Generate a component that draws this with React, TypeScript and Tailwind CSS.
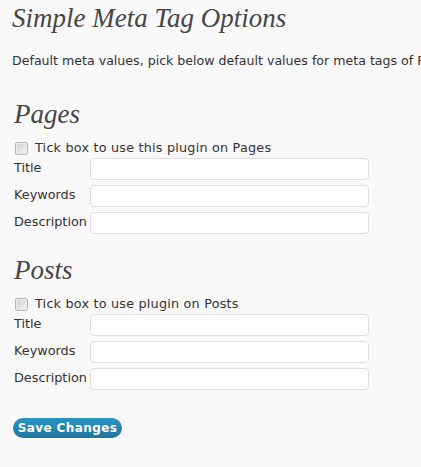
import React from 'react'

const serif = "font-['Georgia','Liberation_Serif',serif] italic font-normal text-[#464646]"
const sans = "font-['Verdana','DejaVu_Sans',sans-serif]"

function Field({ label }: { label: string }) {
  return (
    <div className="flex items-start h-[27px]">
      <label className="w-[76px] pt-[1px] text-[12.8px] text-[#333] leading-[18px] whitespace-nowrap">{label}</label>
      <input
        type="text"
        className="w-[279px] h-[22px] bg-white border border-[#dfdfdf] rounded-[4px] outline-none"
      />
    </div>
  )
}

function Section({ name, tick }: { name: string; tick: string }) {
  return (
    <div>
      <h3 className={`${serif} text-[27px] leading-[30px] pl-[2px]`}>{name}</h3>
      <div className="flex items-center mt-[11px] pl-[3px] h-[16px]">
        <span className="w-[13px] h-[13px] rounded-[2px] border border-[#b5b5b5] bg-gradient-to-br from-[#cfcfcf] to-[#f6f6f6] shadow-[inset_1px_1px_0_#eee]" />
        <span className="ml-[7px] text-[12.8px] text-[#333] leading-[16px] tracking-[0.2px] whitespace-nowrap">{tick}</span>
      </div>
      <div className="mt-[2px] pl-[2px]">
        <Field label="Title" />
        <Field label="Keywords" />
        <Field label="Description" />
      </div>
    </div>
  )
}

export default function App() {
  return (
    <div className={`${sans} bg-[#f9f9f9] w-[421px] h-[467px] overflow-hidden pl-[12px]`}>
      <h2 className={`${serif} text-[27px] leading-[30px] pt-[3px]`}>Simple Meta Tag Options</h2>
      <p className="mt-[20px] text-[12.6px] text-[#333] whitespace-nowrap leading-[16px]">
        Default meta values, pick below default values for meta tags of Pages and Posts
      </p>
      <div className="mt-[30px] flex flex-col gap-[16px]">
        <Section name="Pages" tick="Tick box to use this plugin on Pages" />
        <Section name="Posts" tick="Tick box to use plugin on Posts" />
      </div>
      <button className="mt-[23px] ml-[1px] w-[109px] h-[20px] rounded-full bg-gradient-to-b from-[#2a95c5] to-[#21759b] text-white text-[12px] font-bold tracking-[0.4px] leading-[20px]">
        Save Changes
      </button>
    </div>
  )
}
